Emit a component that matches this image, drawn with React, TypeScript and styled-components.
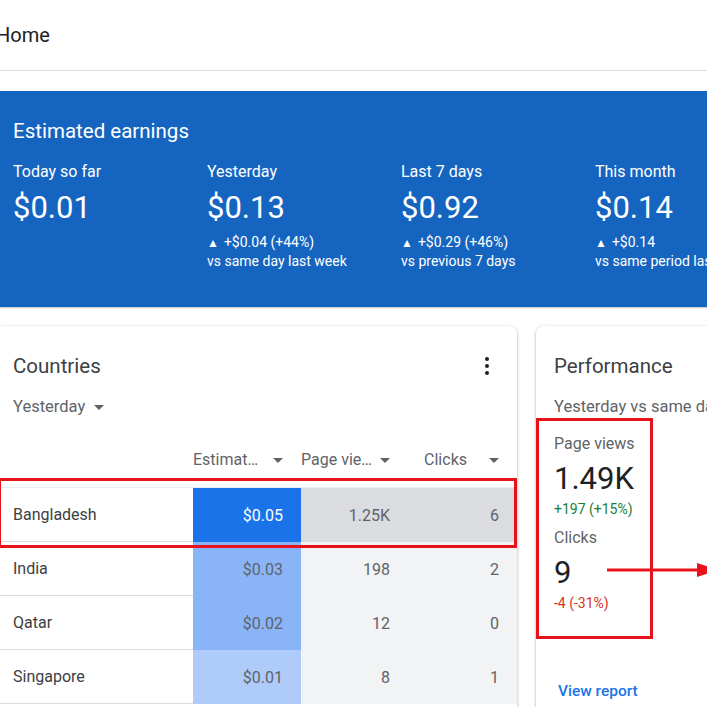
import React from "react";
import styled, { createGlobalStyle } from "styled-components";

const GlobalStyle = createGlobalStyle`
  html, body {
    margin: 0;
    padding: 0;
    background: #fff;
    overflow: hidden;
  }
  body {
    font-family: Roboto, "Liberation Sans", Arial, sans-serif;
    -webkit-font-smoothing: antialiased;
  }
`;

const Page = styled.div`
  width: 1000px;
  margin-left: -4px;
`;

const TopBar = styled.header`
  height: 70px;
  display: flex;
  align-items: center;
  border-bottom: 1px solid #dadce0;
  font-size: 20px;
  color: #202124;
`;

const EarningsCard = styled.section`
  margin-top: 20px;
  background: #1565c0;
  border-radius: 4px;
  padding: 28px 17px 37px;
  color: #fff;
  box-shadow: 0 1px 2px rgba(60, 64, 67, 0.3);
`;

const CardTitle = styled.h2<{ $light?: boolean }>`
  margin: 0;
  font-size: 20.5px;
  line-height: 24px;
  font-weight: 400;
  color: ${(p) => (p.$light ? "#fff" : "#3c4043")};
`;

const StatGrid = styled.div`
  display: grid;
  grid-template-columns: repeat(5, 194px);
  margin-top: 19px;
`;

const Stat = styled.div`
  display: flex;
  flex-direction: column;
`;

const StatLabel = styled.div`
  font-size: 16px;
  line-height: 20px;
`;

const StatValue = styled.div`
  margin-top: 8px;
  font-size: 31px;
  line-height: 36px;
`;

const StatDelta = styled.div`
  margin-top: 7px;
  font-size: 14px;
  line-height: 18px;
  white-space: nowrap;

  & + & {
    margin-top: 0;
  }
`;

const Up = styled.span`
  font-size: 12px;
  margin-right: 5px;
`;

const CardRow = styled.div`
  display: grid;
  grid-template-columns: 521px 1fr;
  gap: 19px;
  margin-top: 19px;
`;

const Card = styled.section`
  position: relative;
  background: #fff;
  border-radius: 8px;
  min-height: 420px;
  box-shadow: 0 1px 2px rgba(60, 64, 67, 0.3), 0 1px 3px 1px rgba(60, 64, 67, 0.15);
`;

const CardHead = styled.div`
  padding: 28px 18px 0 17px;
  display: flex;
  justify-content: space-between;
  align-items: center;
`;

const MenuButton = styled.span`
  display: flex;
  width: 24px;
  height: 24px;
  color: #202124;
`;

const Filter = styled.div`
  margin: 19px 0 0 17px;
  display: flex;
  align-items: center;
  gap: 9px;
  font-size: 16.5px;
  line-height: 20px;
  color: #5f6368;
`;

const Caret = styled.span`
  display: inline-block;
  width: 0;
  height: 0;
  flex: none;
  border-left: 5px solid transparent;
  border-right: 5px solid transparent;
  border-top: 5px solid #5f6368;
`;

const cols = "197px 108px 107px 109px";

const HeadRow = styled.div`
  display: grid;
  grid-template-columns: ${cols};
  margin-top: 33px;
  padding-bottom: 17px;
  border-bottom: 1px solid #e8eaed;
  font-size: 16px;
  line-height: 20px;
  color: #5f6368;
`;

const HeadCell = styled.div<{ $gap: number }>`
  display: flex;
  align-items: center;
  min-width: 0;
  padding-right: 18px;

  span:first-child {
    flex: 1;
    min-width: 0;
    overflow: hidden;
    white-space: nowrap;
    text-overflow: ellipsis;
    text-align: right;
    margin-right: ${(p) => p.$gap}px;
  }
`;

const Row = styled.div`
  display: grid;
  grid-template-columns: ${cols};
  height: 54px;
  font-size: 16px;
  color: #3c4043;
`;

const CountryCell = styled.div`
  display: flex;
  align-items: center;
  padding-left: 17px;
  border-bottom: 1px solid #dadce0;
`;

const NumCell = styled.div<{ $bg: string; $fg?: string }>`
  display: flex;
  align-items: center;
  justify-content: flex-end;
  padding-right: 18px;
  background: ${(p) => p.$bg};
  color: ${(p) => p.$fg || "#5f6368"};
`;

const Highlight = styled.div<{ $top: number; $left: number; $w: string; $h: number }>`
  position: absolute;
  top: ${(p) => p.$top}px;
  left: ${(p) => p.$left}px;
  width: ${(p) => p.$w};
  height: ${(p) => p.$h}px;
  box-sizing: border-box;
  border: 3px solid #e8121a;
  pointer-events: none;
`;

const PerfBody = styled.div`
  padding: 0 18px;
`;

const PerfTitle = styled.div`
  padding: 28px 18px 0;
`;

const Subtitle = styled.div`
  margin-top: 19px;
  font-size: 16.5px;
  line-height: 20px;
  color: #5f6368;
  white-space: nowrap;
`;

const MetricLabel = styled.div<{ $first?: boolean }>`
  margin-top: ${(p) => (p.$first ? 17 : 11)}px;
  font-size: 16px;
  line-height: 20px;
  color: #5f6368;
`;

const MetricValue = styled.div`
  margin-top: 7px;
  font-size: 31px;
  line-height: 36px;
  color: #202124;
`;

const MetricChange = styled.div<{ $up: boolean }>`
  margin-top: 4px;
  font-size: 14px;
  line-height: 16px;
  color: ${(p) => (p.$up ? "#188038" : "#d93025")};
`;

const ViewLink = styled.a`
  display: inline-block;
  margin: 70px 0 0 4px;
  font-size: 15.5px;
  line-height: 20px;
  font-weight: 500;
  color: #1a73e8;
  text-decoration: none;
`;

const Arrow = styled.svg`
  position: absolute;
  left: 71px;
  top: 234px;
`;

const stats = [
  { label: "Today so far", value: "$0.01" },
  { label: "Yesterday", value: "$0.13", delta: "+$0.04 (+44%)", vs: "vs same day last week" },
  { label: "Last 7 days", value: "$0.92", delta: "+$0.29 (+46%)", vs: "vs previous 7 days" },
  { label: "This month", value: "$0.14", delta: "+$0.14", vs: "vs same period last year" },
];

const rows = [
  { country: "Bangladesh", est: "$0.05", views: "1.25K", clicks: "6", tone: "#1a73e8", active: true },
  { country: "India", est: "$0.03", views: "198", clicks: "2", tone: "#8ab4f8" },
  { country: "Qatar", est: "$0.02", views: "12", clicks: "0", tone: "#8ab4f8" },
  { country: "Singapore", est: "$0.01", views: "8", clicks: "1", tone: "#aecbfa" },
];

export default function App() {
  return (
    <>
      <GlobalStyle />
      <Page>
        <TopBar>Home</TopBar>

        <EarningsCard>
          <CardTitle $light>Estimated earnings</CardTitle>
          <StatGrid>
            {stats.map((s) => (
              <Stat key={s.label}>
                <StatLabel>{s.label}</StatLabel>
                <StatValue>{s.value}</StatValue>
                {s.delta && (
                  <StatDelta>
                    <Up>▲</Up>
                    {s.delta}
                  </StatDelta>
                )}
                {s.vs && <StatDelta>{s.vs}</StatDelta>}
              </Stat>
            ))}
          </StatGrid>
        </EarningsCard>

        <CardRow>
          <Card>
            <CardHead>
              <CardTitle>Countries</CardTitle>
              <MenuButton>
                <svg width="24" height="24" viewBox="0 0 24 24" fill="currentColor">
                  <circle cx="12" cy="5" r="2" />
                  <circle cx="12" cy="12" r="2" />
                  <circle cx="12" cy="19" r="2" />
                </svg>
              </MenuButton>
            </CardHead>
            <Filter>
              Yesterday <Caret />
            </Filter>

            <HeadRow>
              <div />
              <HeadCell $gap={13}>
                <span>Estimated earnings</span>
                <Caret />
              </HeadCell>
              <HeadCell $gap={7}>
                <span>Page views</span>
                <Caret />
              </HeadCell>
              <HeadCell $gap={22}>
                <span>Clicks</span>
                <Caret />
              </HeadCell>
            </HeadRow>

            {rows.map((r) => (
              <Row key={r.country}>
                <CountryCell>{r.country}</CountryCell>
                <NumCell $bg={r.tone} $fg={r.active ? "#fff" : "#5f6368"}>
                  {r.est}
                </NumCell>
                <NumCell $bg={r.active ? "#dadce0" : "#f1f3f4"}>{r.views}</NumCell>
                <NumCell $bg={r.active ? "#dadce0" : "#f1f3f4"}>{r.clicks}</NumCell>
              </Row>
            ))}

            <Highlight $top={152} $left={2} $w="calc(100% - 2px)" $h={70} />
          </Card>

          <Card>
            <PerfTitle>
              <CardTitle>Performance</CardTitle>
              <Subtitle>Yesterday vs same day last week</Subtitle>
            </PerfTitle>
            <PerfBody>
              <MetricLabel $first>Page views</MetricLabel>
              <MetricValue>1.49K</MetricValue>
              <MetricChange $up>+197 (+15%)</MetricChange>
              <MetricLabel>Clicks</MetricLabel>
              <MetricValue>9</MetricValue>
              <MetricChange $up={false}>-4 (-31%)</MetricChange>
              <ViewLink href="#">View report</ViewLink>
            </PerfBody>

            <Highlight $top={92} $left={0} $w="117px" $h={221} />
            <Arrow width="120" height="20" viewBox="0 0 120 20">
              <line x1="0" y1="10" x2="94" y2="10" stroke="#e8121a" strokeWidth="3" />
              <polygon points="90,3 112,10 90,17" fill="#e8121a" />
            </Arrow>
          </Card>
        </CardRow>
      </Page>
    </>
  );
}
